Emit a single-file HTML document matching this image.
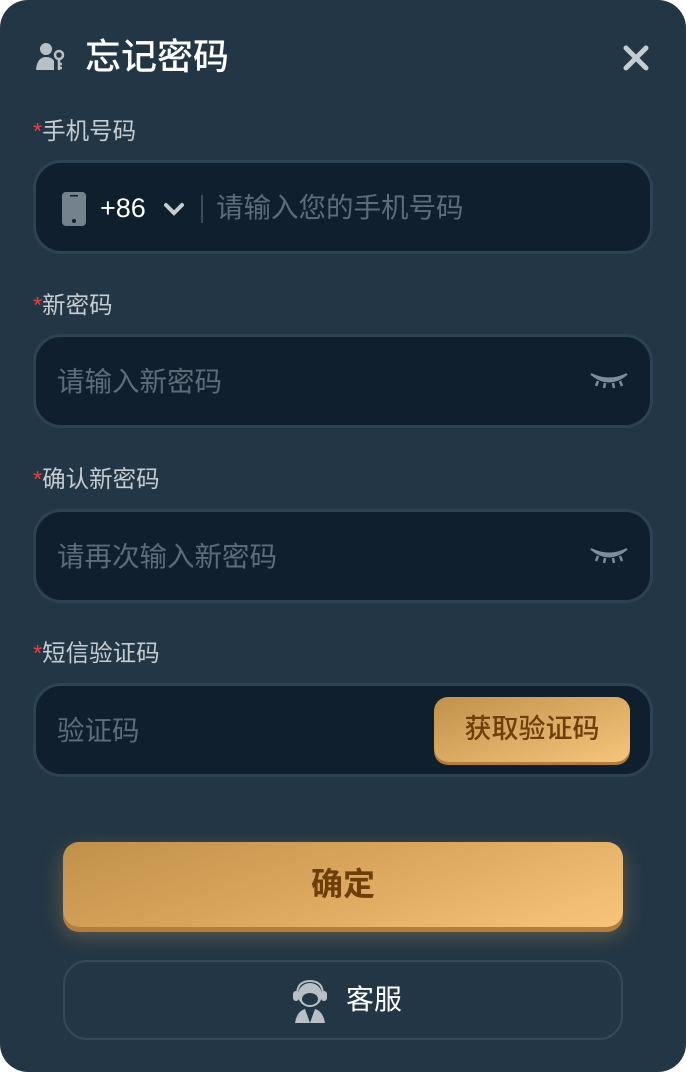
<!DOCTYPE html>
<html><head><meta charset="utf-8"><style>
*{margin:0;padding:0;box-sizing:border-box}
html,body{width:686px;height:1072px;background:#fff;overflow:hidden}
body{font-family:"Liberation Sans","Noto Sans CJK SC",sans-serif}
.card{position:absolute;left:0;top:0;width:686px;height:1072px;background:#233645;border-radius:28px}
.title{position:absolute;left:85px;top:33px;font-size:36px;color:#fff;font-weight:500;line-height:48px}
.close{position:absolute;left:622px;top:44px}
.lbl{position:absolute;left:33px;font-size:23.5px;color:#c5ccd2;line-height:30px}
.lbl b{color:#e8413c;font-weight:normal}
.inp{position:absolute;left:33px;width:620px;height:94px;background:#0f1f2e;border:3px solid #2d4252;border-radius:28px}
.ph{position:absolute;top:27px;font-size:27.5px;color:#5d6c78;line-height:36px}
.eye{position:absolute;right:22px;top:34px}
.btn{position:absolute;left:63px;top:842px;width:560px;height:85px;border-radius:16px;background:linear-gradient(160deg,#c0914a 0%,#dca75e 50%,#f6c57c 100%);box-shadow:0 5px 0 #b57d3d,0 8px 22px rgba(220,170,90,.35);text-align:center;line-height:84px;font-size:32px;font-weight:bold;color:#6e3e08}
.svc{position:absolute;left:63px;top:960px;width:560px;height:80px;border:2px solid #344a5a;border-radius:24px}
.get{position:absolute;right:20px;top:11px;width:196px;height:65px;border-radius:14px;background:linear-gradient(160deg,#c0914a,#f6c57c);box-shadow:0 3px 0 #b57d3d;text-align:center;line-height:64px;font-size:27px;color:#6e3e08;font-weight:500}
</style></head><body>
<div class="card">
<svg style="position:absolute;left:36px;top:42px" width="30" height="30" viewBox="0 0 30 30"><circle cx="10" cy="7" r="6" fill="#b8c0c6"/><path d="M0 28 Q1 15 10 15 Q16 15 18 19 L18 28Z" fill="#b8c0c6"/><circle cx="23" cy="13" r="4" fill="none" stroke="#b8c0c6" stroke-width="2.5"/><path d="M23 17 V28 M23 22 H26 M23 26 H26" stroke="#b8c0c6" stroke-width="2.5"/></svg>
<div class="title">忘记密码</div>
<svg class="close" width="28" height="28" viewBox="0 0 28 28"><path d="M4 4L24 24M24 4L4 24" stroke="#c5ccd2" stroke-width="5" stroke-linecap="round"/></svg>

<div class="lbl" style="top:116px"><b>*</b>手机号码</div>
<div class="inp" style="top:160px">
<svg style="position:absolute;left:25px;top:28px" width="26" height="36" viewBox="0 0 26 36"><rect x="1" y="1" width="24" height="34" rx="4" fill="#74828e"/><rect x="9" y="4" width="8" height="1.5" fill="#0f1f2e"/><circle cx="13" cy="30" r="2" fill="#0f1f2e"/></svg>
<div style="position:absolute;left:64px;top:28px;font-size:27px;color:#fff;line-height:34px">+86</div>
<svg style="position:absolute;left:127px;top:38px" width="22" height="16" viewBox="0 0 22 16"><path d="M3 4L11 12L19 4" stroke="#c5ccd2" stroke-width="4" fill="none" stroke-linecap="round"/></svg>
<div style="position:absolute;left:165px;top:32px;width:2px;height:28px;background:#3a4c5a"></div>
<div class="ph" style="left:180px">请输入您的手机号码</div>
</div>

<div class="lbl" style="top:290px"><b>*</b>新密码</div>
<div class="inp" style="top:334px"><div class="ph" style="left:21px">请输入新密码</div>
<svg class="eye" width="38" height="20" viewBox="0 0 38 20"><path d="M1 3 Q19 18 37 3 Q19 12 1 3Z" fill="#7e8d99" stroke="#7e8d99" stroke-width="2"/><path d="M8 10L6 15M15 12L14 17M23 12L24 17M30 10L32 15" stroke="#7e8d99" stroke-width="2.5"/></svg></div>

<div class="lbl" style="top:464px"><b>*</b>确认新密码</div>
<div class="inp" style="top:509px"><div class="ph" style="left:21px">请再次输入新密码</div>
<svg class="eye" width="38" height="20" viewBox="0 0 38 20"><path d="M1 3 Q19 18 37 3 Q19 12 1 3Z" fill="#7e8d99" stroke="#7e8d99" stroke-width="2"/><path d="M8 10L6 15M15 12L14 17M23 12L24 17M30 10L32 15" stroke="#7e8d99" stroke-width="2.5"/></svg></div>

<div class="lbl" style="top:638px"><b>*</b>短信验证码</div>
<div class="inp" style="top:683px"><div class="ph" style="left:21px">验证码</div><div class="get">获取验证码</div></div>

<div class="btn">确定</div>
<div class="svc">
<svg style="position:absolute;left:226px;top:15px" width="38" height="48" viewBox="0 0 38 48"><circle cx="19" cy="18" r="12" fill="#b8c0c6"/><path d="M6 18 Q6 4 19 4 Q32 4 32 18" stroke="#b8c0c6" stroke-width="2" fill="none"/><rect x="2" y="14" width="6" height="10" rx="3" fill="#b8c0c6"/><rect x="30" y="14" width="6" height="10" rx="3" fill="#b8c0c6"/><ellipse cx="19" cy="22" rx="8" ry="6" fill="#233645"/><path d="M4 46 Q6 34 14 32 L19 46 L24 32 Q32 34 34 46Z" fill="#b8c0c6"/></svg>
<div style="position:absolute;left:281px;top:18px;font-size:28px;color:#fff;line-height:40px">客服</div>
</div>
</div>
</body></html>
